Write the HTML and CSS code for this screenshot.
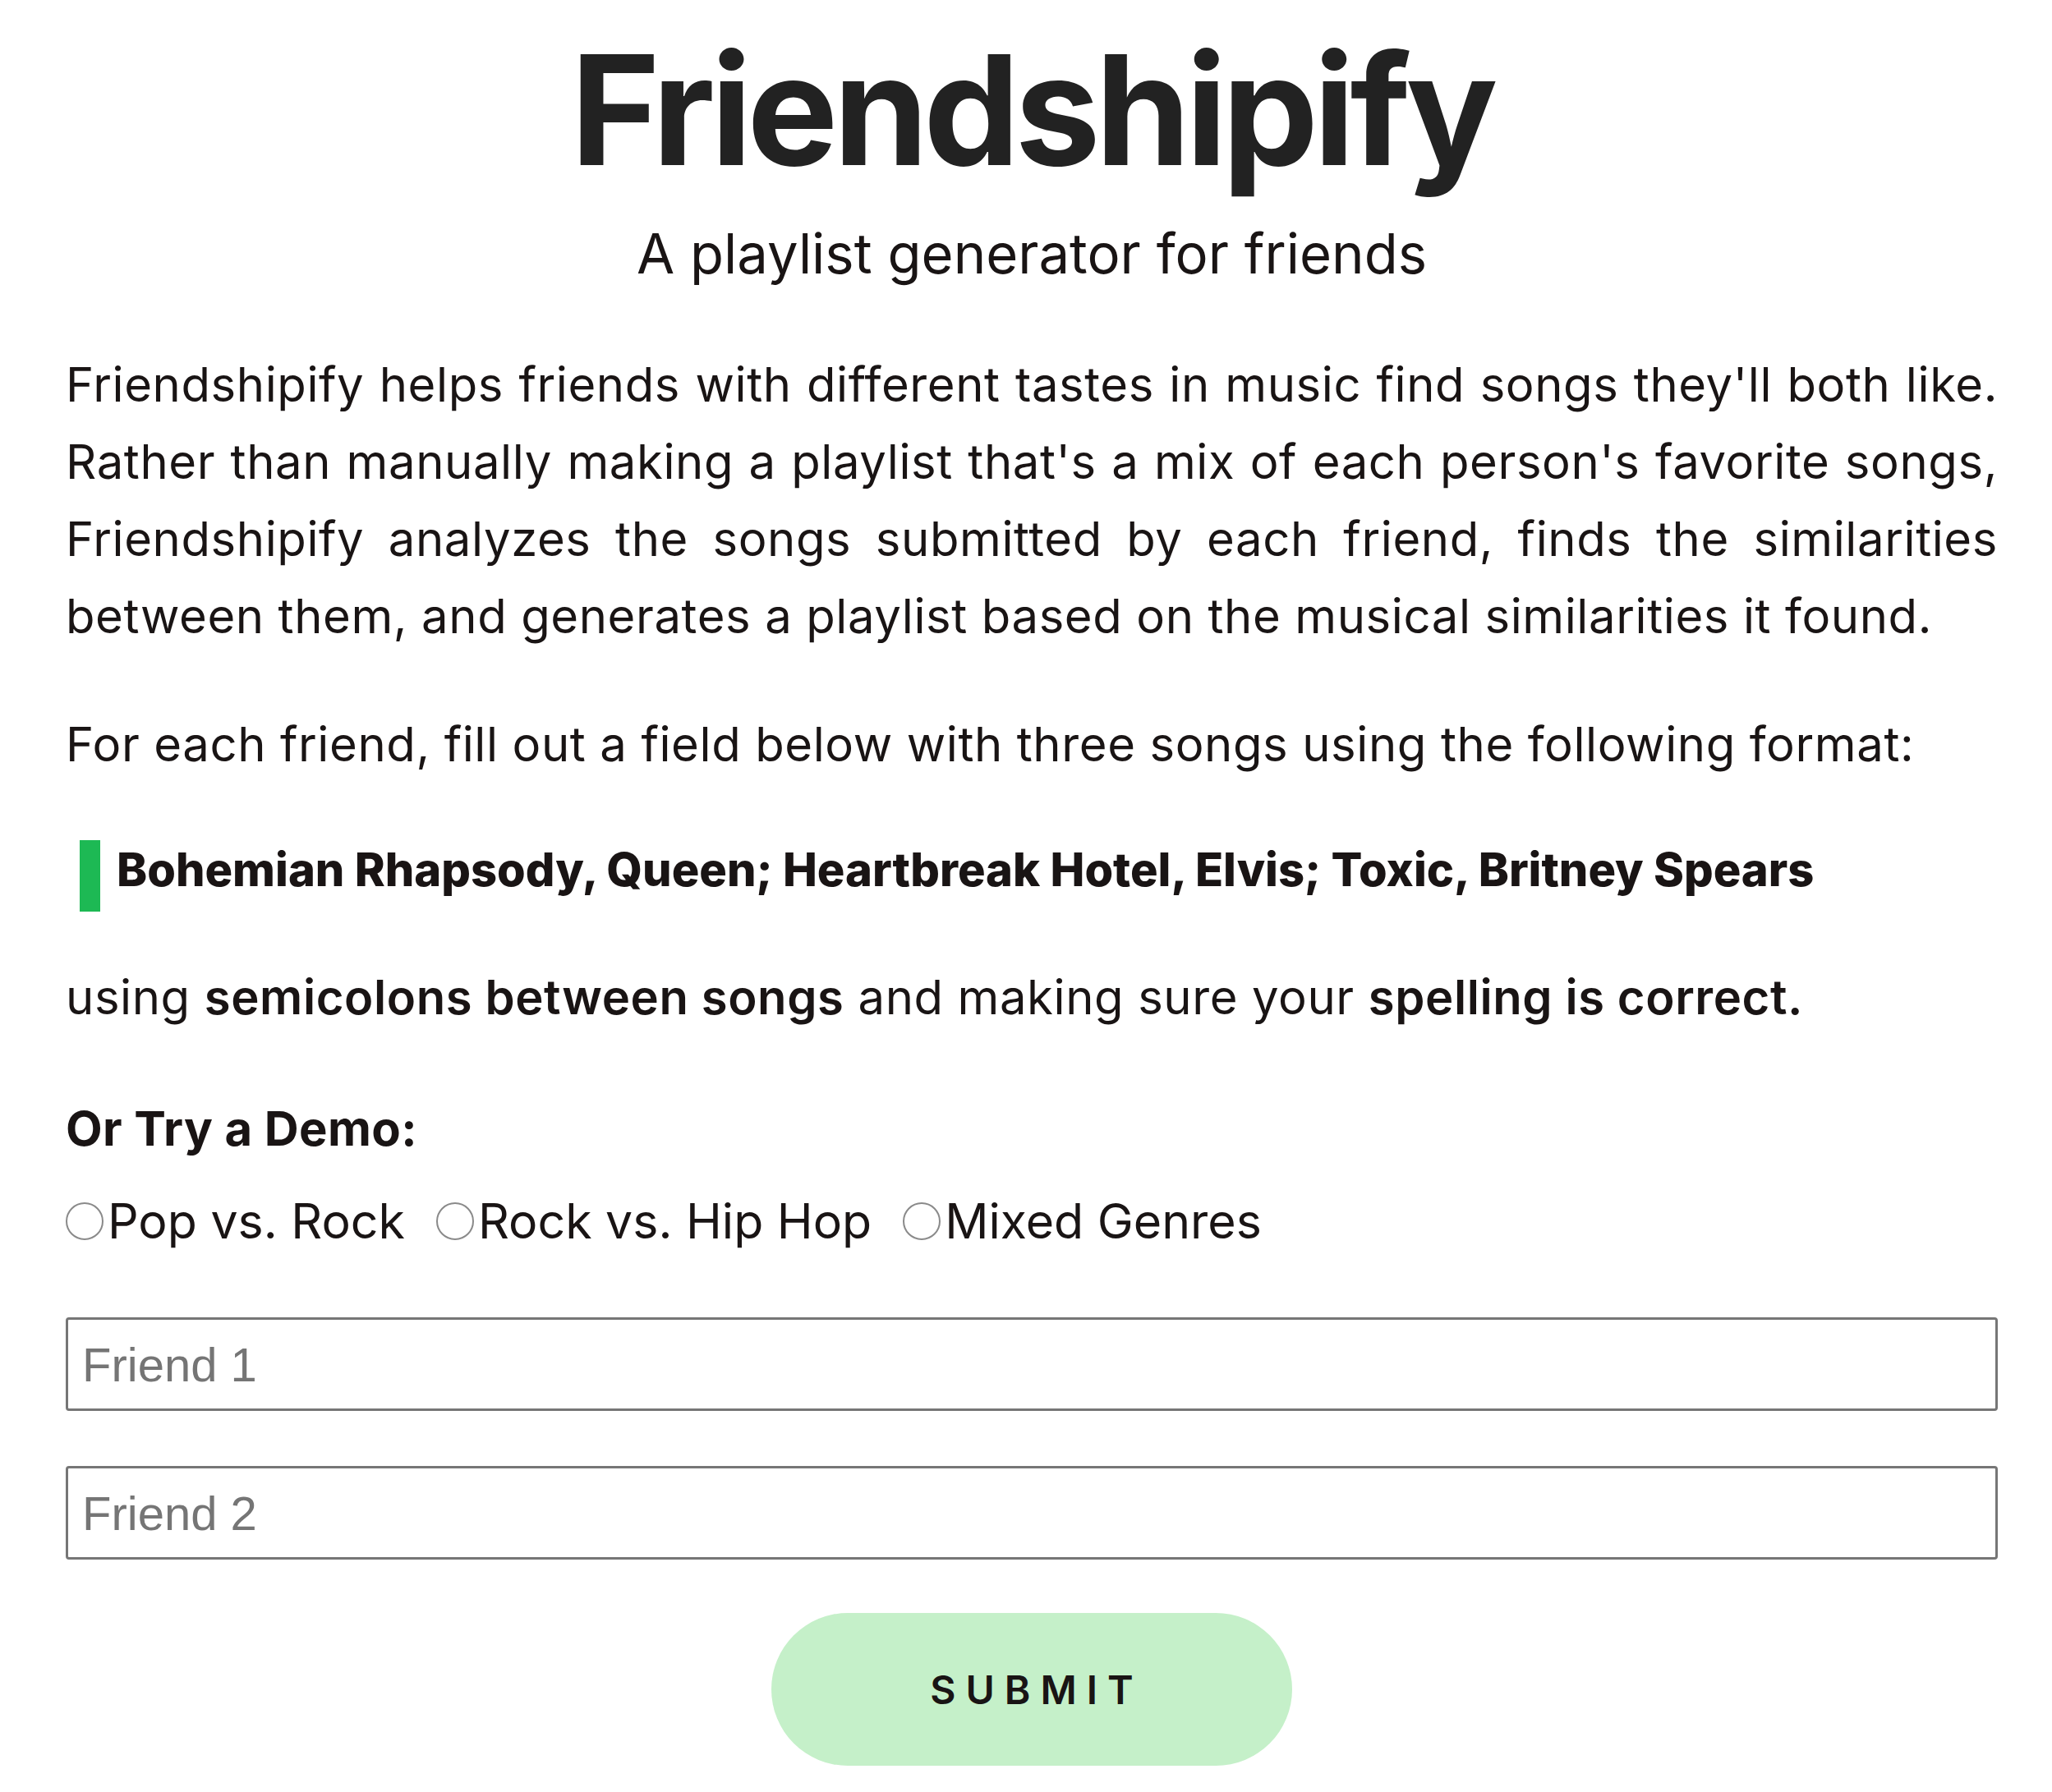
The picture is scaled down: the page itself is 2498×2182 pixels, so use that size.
FILE: index.html
```html
<!DOCTYPE html>
<html lang="en">
<head>
    <meta charset="UTF-8">
    <meta name="viewport" content="width=device-width, initial-scale=1.0">
    <title>Friendshipify</title>
    <link rel="stylesheet" href="styles.css">
</head>
<body>
    <div class="page">
        <header class="hero">
            <h1 class="title">Friendshipify</h1>
            <p class="tagline">A playlist generator for friends</p>
        </header>

        <p class="intro">Friendshipify helps friends with different tastes in music find songs they'll both like. Rather than manually making a playlist that's a mix of each person's favorite songs, Friendshipify analyzes the songs submitted by each friend, finds the similarities between them, and generates a playlist based on the musical similarities it found.</p>

        <p class="instructions">For each friend, fill out a field below with three songs using the following format:</p>

        <blockquote class="format-example">Bohemian Rhapsody, Queen; Heartbreak Hotel, Elvis; Toxic, Britney Spears</blockquote>

        <p class="instructions instructions-note">using <strong>semicolons between songs</strong> and making sure your <strong>spelling is correct.</strong></p>

        <form class="friend-form" onsubmit="return false;">
            <h3 class="demo-title">Or Try a Demo:</h3>
            <div class="demo-options">
                <label class="demo-option"><input type="radio" name="demo" value="pop-rock">Pop vs. Rock</label>
                <label class="demo-option"><input type="radio" name="demo" value="rock-hiphop">Rock vs. Hip Hop</label>
                <label class="demo-option"><input type="radio" name="demo" value="mixed">Mixed Genres</label>
            </div>
            <input type="text" class="friend-input" placeholder="Friend 1">
            <input type="text" class="friend-input friend-input-second" placeholder="Friend 2">
            <button type="submit" class="submit-button">Submit</button>
        </form>
    </div>
</body>
</html>
```

FILE: styles.css
```css
body {
    margin: 0;
    background-color: #ffffff;
    color: #191414;
    font-family: Inter, "Noto Sans", sans-serif;
}
.page {
    padding: 0 66px 0 80px;
    display: flex;
    flex-direction: column;
}
/* title + tagline */
.hero {
    display: flex;
    flex-direction: column;
    align-items: center;
}
.title {
    margin: 41px 0 0 0;
    font-size: 186px;
    line-height: 186px;
    font-weight: 700;
    letter-spacing: -6px;
    color: #222222;
}
.tagline {
    margin: 42px 0 0 0;
    font-size: 67px;
    line-height: 80px;
}
.intro {
    margin: 72px 0 0 0;
    font-size: 58px;
    line-height: 94px;
    letter-spacing: 0.6px;
    text-align: justify;
}
.instructions {
    margin: 62px 0 0 0;
    font-size: 58px;
    line-height: 94px;
    letter-spacing: 0.6px;
}
.instructions-note {
    margin-top: 57px;
}
.instructions strong {
    font-weight: 600;
}
/* green bar example */
.format-example {
    margin: 70px 0 0 17px;
    padding: 0 0 14px 20px;
    border-left: 25px solid #1db954;
    font-size: 56px;
    font-weight: 800;
    line-height: 73px;
}
.friend-form {
    display: flex;
    flex-direction: column;
}
.demo-title {
    margin: 66px 0 0 0;
    font-size: 58px;
    font-weight: 700;
    line-height: 94px;
    letter-spacing: 0.4px;
}
.demo-options {
    display: flex;
    gap: 38px;
    margin-top: 34px;
    font-size: 59px;
    line-height: 64px;
}
.demo-option {
    display: flex;
    align-items: center;
}
.demo-option input {
    appearance: none;
    width: 46px;
    height: 46px;
    margin: 0 5px 0 0;
    border: 2px solid #8a8a8a;
    border-radius: 50%;
    box-sizing: border-box;
}
.friend-input {
    margin-top: 85px;
    height: 114px;
    padding: 0 17px;
    border: 3px solid #767676;
    border-radius: 4px;
    box-sizing: border-box;
    font-family: "Liberation Sans", Arial, sans-serif;
    font-size: 58px;
}
.friend-input-second {
    margin-top: 67px;
}
.friend-input::placeholder {
    color: #757575;
}
.submit-button {
    align-self: center;
    width: 634px;
    height: 186px;
    margin-top: 65px;
    padding: 0 0 0 12px;
    border: none;
    border-radius: 500px;
    background-color: #c5f0c9;
    color: #191414;
    font-family: Inter, sans-serif;
    font-size: 48px;
    font-weight: 600;
    letter-spacing: 12px;
    text-transform: uppercase;
}
```
